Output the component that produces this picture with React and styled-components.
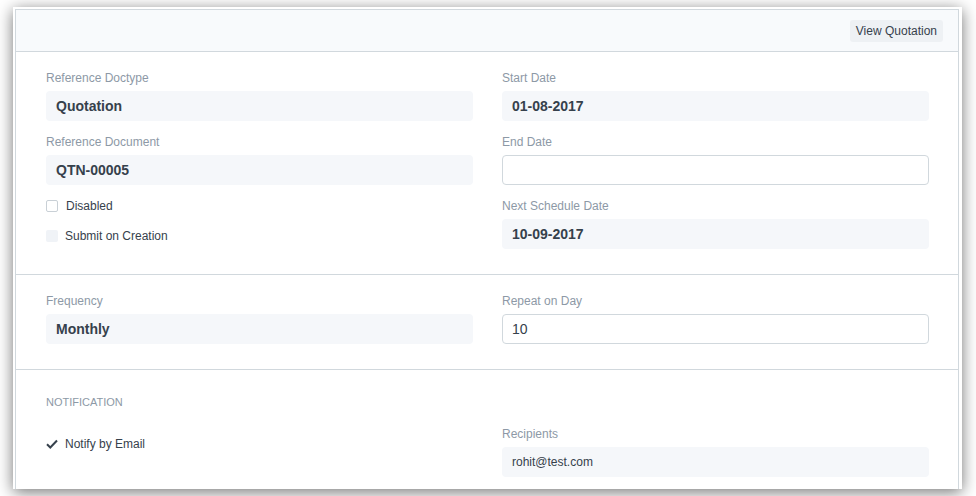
import React from "react";
import styled, { createGlobalStyle } from "styled-components";

const Global = createGlobalStyle`
  html, body { margin: 0; padding: 0; background: #fff; }
  body { font-family: "Liberation Sans", Arial, sans-serif; color: #36414c; }
`;

const Page = styled.div`
  width: 976px;
  height: 496px;
  padding: 7px 0 0 13px;
  box-sizing: border-box;
  overflow: hidden;
`;

const Card = styled.div`
  width: 949px;
  height: 482px;
  background: #fff;
  box-shadow: 0 3px 15px rgba(0, 0, 0, 0.55);
  padding: 2px 3px 0 2px;
  box-sizing: border-box;
  overflow: hidden;
`;

const Panel = styled.div`
  border: 1px solid #d1d8dd;
  border-bottom: none;
  height: 100%;
  box-sizing: border-box;
`;

const Header = styled.div`
  height: 41px;
  background: #f8fafc;
  border-bottom: 1px solid #d1d8dd;
  display: flex;
  align-items: center;
  justify-content: flex-end;
  padding-right: 15px;
`;

const HeaderButton = styled.button`
  height: 22px;
  padding: 0 6px;
  border: none;
  border-radius: 3px;
  background: #eef1f4;
  color: #36414c;
  font-family: "Liberation Sans", Arial, sans-serif;
  font-size: 12px;
  cursor: pointer;
`;

const Section = styled.div`
  padding: ${(p) => (p.$heading ? "16px 29px 0 30px" : "16px 29px 14px 30px")};
  border-bottom: ${(p) => (p.$last ? "none" : "1px solid #d1d8dd")};
`;

const SectionHead = styled.div`
  font-size: 11px;
  line-height: 18px;
  text-transform: uppercase;
  color: #8d99a6;
  margin: 7px 0 13px;
`;

const Columns = styled.div`
  display: grid;
  grid-template-columns: 427px 427px;
  column-gap: 29px;
`;

const Column = styled.div`
  padding-top: ${(p) => p.$offset || 0}px;
`;

const Field = styled.div`
  margin-bottom: 11px;
`;

const Label = styled.div`
  font-size: 12px;
  line-height: 18px;
  color: #8d99a6;
  padding-top: 1px;
  margin-bottom: 4px;
`;

const Value = styled.div`
  height: 30px;
  box-sizing: border-box;
  border-radius: 4px;
  background: ${(p) => (p.$input ? "#fff" : "#f5f7fa")};
  border: ${(p) => (p.$input ? "1px solid #d1d8dd" : "none")};
  padding: 0 ${(p) => (p.$input ? 9 : 10)}px;
  display: flex;
  align-items: center;
  font-size: ${(p) => (p.$small ? 12 : 14)}px;
  font-weight: ${(p) => (p.$bold ? 700 : 400)};
  color: #36414c;
`;

const CheckRow = styled.div`
  display: flex;
  align-items: center;
  height: 18px;
  padding-top: 1px;
  margin-bottom: 11px;
  font-size: 12px;
  color: #36414c;
`;

const Box = styled.span`
  width: 12px;
  height: 12px;
  box-sizing: border-box;
  border-radius: 2px;
  border: ${(p) => (p.$disabled ? "none" : "1px solid #c9d0d6")};
  background: ${(p) => (p.$disabled ? "#f0f3f7" : "#fff")};
  margin-right: ${(p) => (p.$disabled ? 7 : 8)}px;
  flex: none;
`;

const CheckIcon = styled.svg`
  width: 12px;
  height: 12px;
  margin-right: 7px;
  flex: none;
`;

function ReadField({ label, value, small }) {
  return (
    <Field>
      <Label>{label}</Label>
      <Value $bold={!small} $small={small}>{value}</Value>
    </Field>
  );
}

function InputField({ label, value }) {
  return (
    <Field>
      <Label>{label}</Label>
      <Value $input>{value}</Value>
    </Field>
  );
}

export default function App() {
  return (
    <>
      <Global />
      <Page>
        <Card>
          <Panel>
            <Header>
              <HeaderButton>View Quotation</HeaderButton>
            </Header>
            <Section>
              <Columns>
                <Column>
                  <ReadField label="Reference Doctype" value="Quotation" />
                  <ReadField label="Reference Document" value="QTN-00005" />
                  <CheckRow>
                    <Box />
                    Disabled
                  </CheckRow>
                  <CheckRow>
                    <Box $disabled />
                    Submit on Creation
                  </CheckRow>
                </Column>
                <Column>
                  <ReadField label="Start Date" value="01-08-2017" />
                  <InputField label="End Date" value="" />
                  <ReadField label="Next Schedule Date" value="10-09-2017" />
                </Column>
              </Columns>
            </Section>
            <Section>
              <Columns>
                <Column>
                  <ReadField label="Frequency" value="Monthly" />
                </Column>
                <Column>
                  <InputField label="Repeat on Day" value="10" />
                </Column>
              </Columns>
            </Section>
            <Section $heading $last>
              <SectionHead>Notification</SectionHead>
              <Columns>
                <Column $offset={10}>
                  <CheckRow>
                    <CheckIcon viewBox="0 0 12 12">
                      <path d="M1 6.3 L4.3 9.5 L11 2.5" fill="none" stroke="#36414c" strokeWidth="2" />
                    </CheckIcon>
                    Notify by Email
                  </CheckRow>
                </Column>
                <Column>
                  <ReadField label="Recipients" value="rohit@test.com" small />
                </Column>
              </Columns>
            </Section>
          </Panel>
        </Card>
      </Page>
    </>
  );
}
